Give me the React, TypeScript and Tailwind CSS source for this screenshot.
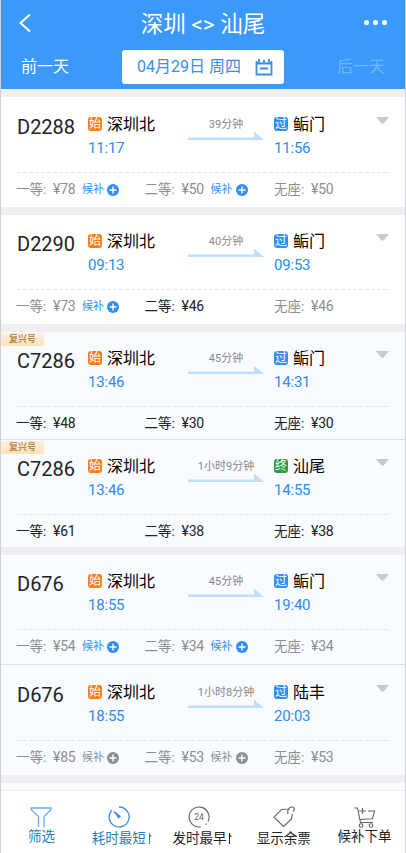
import React from 'react';
import { clsx } from 'clsx';

type Waitlist = 'open' | 'closed';

interface Seat {
  label: string;
  price: number;
  available?: boolean;
  waitlist?: Waitlist;
}

interface Train {
  no: string;
  fuxing?: boolean;
  tinted?: boolean;
  depart: string;
  arrive: string;
  duration: string;
  to: string;
  terminal?: boolean;
  seats: Seat[];
  // height of the card and what follows it
  size: string;
  divider: 'gap' | 'line';
}

const trains: Train[] = [
  {
    no: 'D2288', depart: '11:17', arrive: '11:56', duration: '39分钟', to: '鲘门', size: 'h-[110px] pt-px', divider: 'gap',
    seats: [
      { label: '一等', price: 78, waitlist: 'open' },
      { label: '二等', price: 50, waitlist: 'open' },
      { label: '无座', price: 50 },
    ],
  },
  {
    no: 'D2290', depart: '09:13', arrive: '09:53', duration: '40分钟', to: '鲘门', size: 'h-[109px]', divider: 'gap',
    seats: [
      { label: '一等', price: 73, waitlist: 'open' },
      { label: '二等', price: 46, available: true },
      { label: '无座', price: 46 },
    ],
  },
  {
    no: 'C7286', fuxing: true, tinted: true, depart: '13:46', arrive: '14:31', duration: '45分钟', to: '鲘门', size: 'h-[107px]', divider: 'line',
    seats: [
      { label: '一等', price: 48, available: true },
      { label: '二等', price: 30, available: true },
      { label: '无座', price: 30, available: true },
    ],
  },
  {
    no: 'C7286', fuxing: true, tinted: true, depart: '13:46', arrive: '14:55', duration: '1小时9分钟', to: '汕尾', terminal: true, size: 'h-[107px]', divider: 'gap',
    seats: [
      { label: '一等', price: 61, available: true },
      { label: '二等', price: 38, available: true },
      { label: '无座', price: 38, available: true },
    ],
  },
  {
    no: 'D676', tinted: true, depart: '18:55', arrive: '19:40', duration: '45分钟', to: '鲘门', size: 'h-[109px]', divider: 'line',
    seats: [
      { label: '一等', price: 54, waitlist: 'open' },
      { label: '二等', price: 34, waitlist: 'open' },
      { label: '无座', price: 34 },
    ],
  },
  {
    no: 'D676', tinted: true, depart: '18:55', arrive: '20:03', duration: '1小时8分钟', to: '陆丰', size: 'h-[110px] pt-px', divider: 'gap',
    seats: [
      { label: '一等', price: 85, waitlist: 'closed' },
      { label: '二等', price: 53, waitlist: 'closed' },
      { label: '无座', price: 53 },
    ],
  },
];

function Badge({ text, color }: { text: string; color: string }) {
  return (
    <span className={clsx('mb-px flex h-3.5 w-3.5 shrink-0 items-center justify-center rounded-[3px] pt-px text-[12px] leading-[13px] text-white', color)}>
      {text}
    </span>
  );
}

function Stop({ badge, color, name, time }: { badge: string; color: string; name: string; time: string }) {
  return (
    <div>
      <div className="flex h-[22px] items-center gap-[5px] text-base text-black">
        <Badge text={badge} color={color} />
        <span className="pt-0.5">{name}</span>
      </div>
      <div className="pt-px text-[15px] leading-6 tracking-[-0.2px] text-[#2d8cec]">{time}</div>
    </div>
  );
}

function SeatCell({ seat }: { seat: Seat }) {
  return (
    <div className={clsx('flex h-5 items-center leading-5', seat.available ? 'text-[#222]' : 'text-[#8e8e8e]')}>
      <span className="w-[37px] text-[13.5px]">{seat.label}:</span>
      <span className="w-[23px] text-sm tracking-[-0.2px]">¥{seat.price}</span>
      {seat.waitlist && (
        <span className={clsx('ml-[6px] flex items-center gap-[3px] pt-0.5 text-[11px]', seat.waitlist === 'open' ? 'text-[#2f8ff2]' : 'text-[#8e8e8e]')}>
          候补
          <svg className="h-3 w-3" viewBox="0 0 12 12">
            <circle cx="6" cy="6" r="6" fill="currentColor" />
            <path d="M6 2.5v7M2.5 6h7" stroke="#fff" strokeWidth="1.4" />
          </svg>
        </span>
      )}
    </div>
  );
}

function TrainCard({ train }: { train: Train }) {
  return (
    <>
      <article className={clsx('relative shrink-0', train.size, train.tinted ? 'bg-[#f8fbff]' : 'bg-white')}>
        {train.fuxing && (
          <span className="absolute top-px left-0 h-[13px] w-[43px] bg-linear-to-b from-[#fff0e2] to-[#fde2b8] pl-2 text-[9px] leading-[13px] font-medium text-[#a87932]">
            复兴号
          </span>
        )}
        <div className="grid h-[74px] grid-cols-[71px_100px_86px_102px_16px] pt-[15px] pl-4">
          <div className="text-xl leading-7 text-[#222]">{train.no}</div>
          <Stop badge="始" color="bg-[#fb7d16]" name="深圳北" time={train.depart} />
          <div className="w-[76px] pt-1">
            <div className="text-center text-[11px] leading-4 whitespace-nowrap text-[#888]">{train.duration}</div>
            <svg className="-mt-0.5 h-2.5 w-[76px]" viewBox="0 0 76 10">
              <path d="M0 6.5H66V.5L76 9H0z" fill="#bfdfff" />
            </svg>
          </div>
          <Stop
            badge={train.terminal ? '终' : '过'}
            color={train.terminal ? 'bg-[#2e9b3d]' : 'bg-[#318ff5]'}
            name={train.to}
            time={train.arrive}
          />
          <svg className="mt-1 h-[7px] w-[13px]" viewBox="0 0 13 7">
            <path d="M0 0H13L8 6Q6.5 7.5 5 6z" fill="#c9c9c9" />
          </svg>
        </div>
        <div className="mr-[15px] ml-4 h-px bg-[repeating-linear-gradient(90deg,#e5e5e5_0_4px,transparent_4px_6px)]" />
        <div className="grid grid-cols-[128.5px_129.5px_1fr] pt-1.5 pl-[15px]">
          {train.seats.map((seat) => (
            <SeatCell key={seat.label} seat={seat} />
          ))}
        </div>
      </article>
      <div className={clsx('shrink-0', train.divider === 'gap' ? 'h-2 bg-[#eeeef3]' : 'h-px bg-[#dcdfe3]')} />
    </>
  );
}

function SortMark() {
  return (
    <svg className="ml-[3px] h-3 w-1" viewBox="0 0 4 12" fill="none">
      <path d="M.5 1v11" stroke="currentColor" />
      <path d="M.5 2L3.2 4.8H.5z" fill="currentColor" opacity=".8" />
    </svg>
  );
}

interface TabProps {
  label: string;
  active?: boolean;
  sort?: boolean;
  raised?: boolean;
  children: React.ReactNode;
}

function Tab({ label, active, sort, raised, children }: TabProps) {
  return (
    <button className="flex flex-col items-center pt-[15px]">
      <svg
        className={clsx('h-[22px] w-[22px]', active ? 'text-[#438ee8]' : 'text-[#5d6470]', sort && 'mr-[7px]')}
        viewBox="0 0 22 22"
        fill="none"
        stroke="currentColor"
        strokeWidth="1.1"
      >
        {children}
      </svg>
      <span className={clsx('flex items-center text-[13.5px] leading-5 whitespace-nowrap', active ? 'text-[#267fb9]' : 'text-[#222]', raised && '-mt-0.5')}>
        {label}
        {sort && <SortMark />}
      </span>
    </button>
  );
}

export default function App() {
  return (
    <div className="flex h-[853px] w-[406px] flex-col overflow-hidden border-x border-[#cfd0d6] bg-[#eeeef3] font-['Roboto','Noto_Sans_CJK_SC',sans-serif]">
      <header className="-mx-px h-[89px] shrink-0 border-x border-[#3589e4] bg-[#3b99fc] text-white">
        <div className="grid h-[46px] grid-cols-[60px_1fr_60px] items-center">
          <svg className="ml-[17px] h-[20px] w-[14px]" viewBox="0 0 14 20" fill="none">
            <path d="M12 1.5L2.5 10l9.5 8.5" stroke="#fff" strokeWidth="2" />
          </svg>
          <h1 className="pt-px text-center text-[22.5px] leading-8">深圳 &lt;&gt; 汕尾</h1>
          <div className="flex gap-1 pb-px pl-[19px]">
            <span className="h-[5px] w-[5px] rounded-full bg-white" />
            <span className="h-[5px] w-[5px] rounded-full bg-white" />
            <span className="h-[5px] w-[5px] rounded-full bg-white" />
          </div>
        </div>
        <div className="grid h-[42px] grid-cols-[101px_162px_1fr] items-center pl-5 text-base">
          <span>前一天</span>
          <div className="flex h-[34px] items-center justify-between rounded-[3px] bg-white pr-[11px] pl-[15px] text-[#3a8ee6]">
            <span>04月29日 周四</span>
            <svg className="h-[18px] w-[18px]" viewBox="0 0 18 18" fill="none" stroke="currentColor" strokeWidth="1.8">
              <path d="M1.5 3v13.5h15V3M1 5.5h16M4 1v4.5M9 2v3.5M14 1v4.5M4.8 10.5h8.4" />
            </svg>
          </div>
          <span className="pr-5 text-right text-[#73b5fb]">后一天</span>
        </div>
      </header>
      <div className="h-2 shrink-0 bg-[#eeeef3]" />
      <main className="flex flex-col">
        {trains.map((train, i) => (
          <TrainCard key={i} train={train} />
        ))}
      </main>
      <div className="min-h-0 flex-1 bg-[#f8fbff]" />
      <nav className="grid h-[63px] shrink-0 grid-cols-5 border-t border-[#ececf0] bg-white">
        <Tab label="筛选" active raised>
          <path d="M8.5 20v-9.5L1 3.5V2h20v1.5l-7 7V21.5M8.5 20v1" stroke="#69aef3" strokeWidth="1.3" />
        </Tab>
        <Tab label="耗时最短" active sort>
          <path d="M11 1a10 10 0 1 1-7 3" strokeWidth="1.3" />
          <path d="M6 5.5l5 5.5" strokeWidth="1.3" />
          <path d="M7.5 6.5l4.7 4-1.7 1.5z" fill="currentColor" />
        </Tab>
        <Tab label="发时最早" sort>
          <path d="M12.5 20.9A10 10 0 1 1 20 15.5M18.5 17.7l-1 .9" />
          <text x="11" y="14" textAnchor="middle" fontSize="8.5" fill="currentColor" stroke="none">24</text>
        </Tab>
        <Tab label="显示余票">
          <path d="M13.5 3.2L8.5 3.5 1 11.2l9.5 9.3 8-7.5.8-5M15 8c-1-4 1-7 4-7 2.5 0 3 3 1 4.5M14 3.2l2.5.2" />
        </Tab>
        <Tab label="候补下单" raised>
          <path d="M.5 2h3l3 14.5h12.5M5.5 13.5l13-.8L20.5 5H14M8.5 2v6M5 5h7" />
          <circle cx="7" cy="19.5" r="1.8" />
          <circle cx="17" cy="19.5" r="1.8" />
        </Tab>
      </nav>
    </div>
  );
}
